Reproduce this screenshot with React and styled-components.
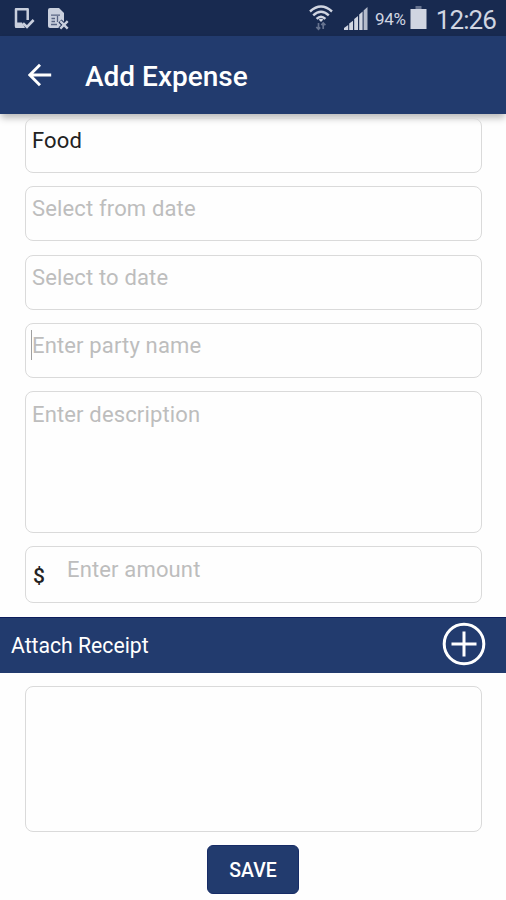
import styled, { createGlobalStyle } from "styled-components";

export default function App() {
  return (
    <Screen>
      <GlobalStyle />
      <StatusBar>
        <Notifications>
          <DeviceCheckIcon />
          <SimErrorIcon />
        </Notifications>
        <SystemIcons>
          <WifiIcon />
          <SignalIcon />
          <Battery>94%</Battery>
          <BatteryIcon />
          <Clock>12:26</Clock>
        </SystemIcons>
      </StatusBar>

      <Header>
        <BackButton aria-label="Back">
          <svg width="24" height="24" viewBox="0 0 24 24" fill="none">
            <path
              d="M23.2 12H2M12 1.8L1.8 12L12 22.2"
              stroke="#ffffff"
              strokeWidth="2.9"
            />
          </svg>
        </BackButton>
        <Title>Add Expense</Title>
      </Header>

      <Form>
        <Field>
          <Value>Food</Value>
        </Field>
        <Field>
          <Hint>Select from date</Hint>
        </Field>
        <Field>
          <Hint>Select to date</Hint>
        </Field>
        <Field>
          <Caret />
          <Hint>Enter party name</Hint>
        </Field>
        <TallField $height={142}>
          <Hint>Enter description</Hint>
        </TallField>
        <TallField $height={57}>
          <Currency>$</Currency>
          <Hint>Enter amount</Hint>
        </TallField>
      </Form>

      <ReceiptBar>
        <ReceiptTitle>Attach Receipt</ReceiptTitle>
        <AddButton aria-label="Add receipt">
          <svg width="44" height="44" viewBox="0 0 44 44" fill="none">
            <circle cx="22" cy="22" r="19.8" stroke="#ffffff" strokeWidth="3" />
            <path d="M22 9.5V34.5M9.5 22H34.5" stroke="#ffffff" strokeWidth="3" />
          </svg>
        </AddButton>
      </ReceiptBar>

      <ReceiptArea />
      <SaveButton>SAVE</SaveButton>
    </Screen>
  );
}

function DeviceCheckIcon() {
  return (
    <svg width="21" height="22" viewBox="0 0 21 22" fill="none">
      <path
        d="M13.7 12V1.2H2V18.3H9"
        stroke="#c9cfdd"
        strokeWidth="2.5"
        strokeLinejoin="round"
      />
      <path d="M1 14.5H8L11 20H2Q1 20 1 19Z" fill="#c9cfdd" />
      <path d="M9 15.2L13 19L19.6 12" stroke="#c9cfdd" strokeWidth="2.6" />
    </svg>
  );
}

function SimErrorIcon() {
  return (
    <svg width="21" height="22" viewBox="0 0 21 22" fill="none">
      <path d="M2 0H11L16 5V13L13 20H2Q0 20 0 18V2Q0 0 2 0Z" fill="#c9cfdd" />
      <path
        d="M3 7.2H12M3.5 10.5H7M3.5 13.5H7M9.5 8V14M3 16.5H9"
        stroke="#586482"
        strokeWidth="1.3"
      />
      <path d="M12 13L20 21M20 13L12 21" stroke="#182a50" strokeWidth="4.4" />
      <path d="M12.3 13.2L19.7 20.6M19.7 13.2L12.3 20.6" stroke="#c9cfdd" strokeWidth="2.4" />
    </svg>
  );
}

function WifiIcon() {
  return (
    <svg width="24" height="26" viewBox="0 0 24 26" fill="none">
      <path
        d="M1 6.5Q12 -3.5 23 6.5M4.2 10.3Q12 3 19.8 10.3M7.6 13.8Q12 9.5 16.4 13.8"
        stroke="#d0d5e1"
        strokeWidth="2.4"
      />
      <path d="M9.6 14.6Q12 12.7 14.4 14.6L12 17Z" fill="#d0d5e1" />
      <path
        d="M9.5 24V18M7.3 22L9.5 24.2L11.2 22.4M14.2 24V18M12.3 20L14.2 18L16.4 20.2"
        stroke="#66738f"
        strokeWidth="1.7"
      />
    </svg>
  );
}

function SignalIcon() {
  return (
    <svg width="24" height="24" viewBox="0 0 24 24">
      <path
        d="M0 24V22L4.2 19V24ZM5.2 24V17.6L9 14.8V24ZM10.2 24V13L14 10V24ZM15.2 24V8.5L18.6 5.6V24Z"
        fill="#d0d5e1"
      />
      <path d="M19.6 24V4.5L23.5 1V24Z" fill="#b4bbcb" />
    </svg>
  );
}

function BatteryIcon() {
  return (
    <svg width="17" height="23" viewBox="0 0 17 23">
      <path d="M5.5 0H11.5V3H5.5Z" fill="#66738f" />
      <path d="M0.5 3H16.5V23H0.5Z" fill="#d0d5e1" />
    </svg>
  );
}

const GlobalStyle = createGlobalStyle`
  * {
    box-sizing: border-box;
  }

  body {
    margin: 0;
    background: #fefefe;
    font-family: Roboto, "Liberation Sans", sans-serif;
  }

  button {
    border: 0;
    padding: 0;
    font-family: inherit;
  }

  svg {
    display: block;
    flex: none;
  }
`;

const Screen = styled.div`
  width: 506px;
  height: 900px;
  display: flex;
  flex-direction: column;
  overflow: hidden;
`;

const StatusBar = styled.div`
  height: 36px;
  flex: none;
  display: flex;
  justify-content: space-between;
  padding: 0 10px 0 14px;
  background: #182a50;
`;

const Notifications = styled.div`
  display: flex;
  gap: 13px;
  padding-top: 8px;
`;

const SystemIcons = styled.div`
  display: flex;
  align-items: flex-start;
  color: #d0d5e1;

  svg {
    margin-top: 6px;
  }

  svg:first-child {
    margin-top: 5px;
  }

  svg + svg {
    margin-left: 11px;
  }
`;

const Battery = styled.span`
  font-size: 17px;
  line-height: 20px;
  letter-spacing: -0.3px;
  margin: 9px 4px 0 7px;
`;

const Clock = styled.span`
  font-size: 26px;
  line-height: 30px;
  letter-spacing: -0.9px;
  margin: 5px 0 0 9px;
`;

const Header = styled.header`
  height: 78px;
  flex: none;
  display: flex;
  align-items: center;
  gap: 33px;
  padding: 0 0 0 28px;
  background: #223b6e;
  box-shadow: 0 5px 7px -1px rgba(0, 0, 0, 0.27);
`;

const BackButton = styled.button`
  background: none;
`;

const Title = styled.h1`
  margin: 4px 0 0;
  font-size: 28px;
  font-weight: 500;
  line-height: 34px;
  color: #ffffff;
`;

const Form = styled.div`
  display: flex;
  flex-direction: column;
  gap: 13.3px;
  padding: 4px 24px 13.5px 25px;
`;

const Field = styled.div`
  height: ${({ $height }) => $height || 55}px;
  flex: none;
  display: flex;
  align-items: flex-start;
  padding: 8px 0 0 6px;
  border: 1px solid #dadada;
  border-radius: 8px;
`;

const TallField = styled(Field)`
  padding-top: 9px;
`;

const Value = styled.span`
  font-size: 22px;
  line-height: 28px;
  letter-spacing: 0.15px;
  color: #222222;
`;

const Hint = styled(Value)`
  color: #bdbdbd;
`;

const Caret = styled.span`
  width: 1px;
  height: 30px;
  margin: -2px 0 0 -1px;
  background: #a0a0a0;
`;

const Currency = styled.span`
  width: 35px;
  padding-left: 1px;
  margin-top: 6px;
  font-size: 21px;
  font-weight: 500;
  line-height: 28px;
  color: #222222;
`;

const ReceiptBar = styled.div`
  height: 56px;
  flex: none;
  display: flex;
  align-items: center;
  justify-content: space-between;
  padding: 0 20px 2px 11px;
  background: #223b6e;
  border-top: 1px solid #0c1d5c;
`;

const ReceiptTitle = styled.h2`
  margin: 4px 0 0;
  font-size: 21.2px;
  font-weight: 400;
  line-height: 28px;
  color: #ffffff;
`;

const AddButton = styled.button`
  background: none;
`;

const ReceiptArea = styled.div`
  height: 146px;
  flex: none;
  margin: 13px 24px 13px 25px;
  border: 1px solid #dadada;
  border-radius: 8px;
`;

const SaveButton = styled.button`
  width: 92px;
  height: 49px;
  flex: none;
  align-self: center;
  padding-top: 2px;
  border: 1px solid #172c66;
  border-radius: 6px;
  background: #223b6e;
  color: #ffffff;
  font-size: 19.4px;
  font-weight: 500;
`;
